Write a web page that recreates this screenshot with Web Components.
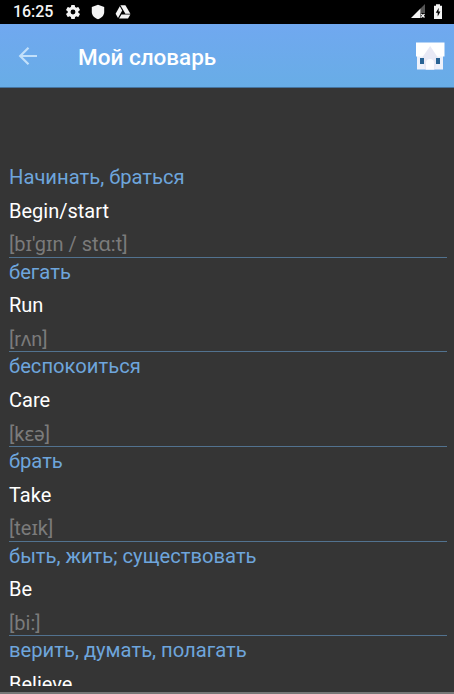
<!DOCTYPE html>
<html lang="ru">
<head>
<meta charset="utf-8">
<title>Мой словарь</title>
<style>
html, body { margin: 0; height: 100%; overflow: hidden; background: #353535; }
body { font-family: Roboto, "Noto Sans", sans-serif; }
</style>
</head>
<body>
<dictionary-screen></dictionary-screen>
<script>
class Base extends HTMLElement {
  constructor() {
    super();
    this.attachShadow({ mode: 'open' }).innerHTML = this.constructor.markup;
  }
}

class StatusBar extends Base {
  static markup = `
<style>
:host { display: flex; align-items: center; height: 24px; background: #000; color: #f4f4f4; padding: 0 11px 0 13px; box-sizing: border-box; }
.time { font: 500 16px/24px Roboto, sans-serif; width: 52px; letter-spacing: -.05px; white-space: nowrap; }
.left { display: flex; align-items: center; gap: 9px; flex: 1; margin-top: -1px; }
.right { display: flex; align-items: center; gap: 7px; margin-top: -2px; }
svg { display: block; fill: #f4f4f4; }
</style>
<span class="time">16:25</span>
<div class="left">
  <svg width="16" height="16" viewBox="1.2 1.2 21.600 21.600"><path d="M19.14 12.94c.04-.3.06-.61.06-.94s-.02-.64-.07-.94l2.03-1.58a.49.49 0 0 0 .12-.61l-1.92-3.32a.49.49 0 0 0-.59-.22l-2.39.96a7 7 0 0 0-1.62-.94l-.36-2.54a.48.48 0 0 0-.48-.41h-3.84a.48.48 0 0 0-.47.41l-.36 2.54a7.4 7.4 0 0 0-1.62.94l-2.39-.96a.48.48 0 0 0-.59.22L2.73 8.87a.48.48 0 0 0 .12.61l2.03 1.58a6 6 0 0 0 0 1.88l-2.03 1.58a.49.49 0 0 0-.12.61l1.92 3.32c.12.22.37.29.59.22l2.39-.96c.5.38 1.03.7 1.62.94l.36 2.54c.05.24.24.41.48.41h3.84c.24 0 .44-.17.47-.41l.36-2.54a7.4 7.4 0 0 0 1.62-.94l2.39.96c.22.08.47 0 .59-.22l1.92-3.32a.48.48 0 0 0-.12-.61zM12 15.3a3.3 3.3 0 1 1 0-6.600 3.300 3.300 0 0 1 0 6.600z"/></svg>
  <svg width="16" height="16" viewBox="0 0 16 16"><path d="M8 .8 14.200 3v5c0 3.300-2.600 6.100-6.200 7.200C4.400 14.100 1.800 11.300 1.800 8V3z"/></svg>
  <svg width="16" height="16" viewBox="0 0 16 16"><path d="M5.400 1.300h5L15.400 9.700h-5z"/><path d="M4.800 2.200 7.200 6.400 3 13.900.6 9.800z"/><path d="M6.400 10.600h9L13 14.500H4.100z"/></svg>
</div>
<div class="right">
  <svg width="15" height="15" viewBox="0 0 15 15"><path d="M9.500 4.500V14H0z"/><path d="M14 0v9H9.500V4.500z" opacity=".35"/><path d="m10.200 10 3.300 3.500m0-3.500-3.300 3.500" stroke="#f4f4f4" stroke-width="1.300"/></svg>
  <svg width="10" height="15" viewBox="0 0 10 15"><path d="M3 .2h4v1.600h2V15H1V1.800h2z"/><path d="M5.800 3.800 2.800 8.700h1.900v3.700l2.700-5H5.500z" fill="#000"/></svg>
</div>`;
}

class AppBar extends Base {
  static markup = `
<style>
:host { display: flex; align-items: center; height: 64px; box-sizing: border-box; padding: 0 9px 1px 17px; background: linear-gradient(#70a8f0, #68ade6); border-bottom: 1px solid #46749f; color: #fff; }
h1 { flex: 1; margin: 0 0 0 39px; font: 500 22.500px/28px Roboto, sans-serif; padding-top: 3px; white-space: nowrap; }
svg { display: block; }
.back { margin-top: 1px; }
.home { margin-top: 1px; }
</style>
<svg class="back" width="22" height="22" viewBox="0 0 22 22" fill="none" stroke="#c2e0fa" stroke-width="2.200"><path d="M20 11H3M11.500 2.700 3.200 11l8.300 8.300"/></svg>
<h1><slot></slot></h1>
<svg class="home" width="30" height="28" viewBox="0 0 30 28"><path fill="#edf1fb" d="M2 12h26v15.500H2z"/><path fill="#fff" d="M1 .5h28.500v14H1z"/><path fill="#e8e9f5" d="m15.200 4 7.300 11v4l-3 8.500h-9L7.500 19v-4z"/><path fill="#fbfcff" d="M11 27.500V21a4 4 0 0 1 8 0v6.500z"/><path fill="#286394" d="M5 16h4v6H5zM21 16h4v6h-4z"/></svg>`;
}

class WordEntry extends Base {
  static markup = `
<style>
:host { display: flex; flex-direction: column; gap: 9.600px; box-sizing: border-box; height: 94.600px; flex: none; padding-top: 2px; border-bottom: 1px solid #52728f; font: 400 20px/24px Roboto, "Noto Sans", sans-serif; white-space: nowrap; }
.ru { color: #6ea5dc; font-size: 20.200px; }
.en { color: #fff; }
.ipa { color: #7b7b7b; }
</style>
<div class="ru"><slot name="ru"></slot></div>
<div class="en"><slot name="en"></slot></div>
<div class="ipa"><slot name="ipa"></slot></div>`;
}

class DictionaryScreen extends Base {
  static markup = `
<style>
:host { display: flex; flex-direction: column; height: 694px; box-sizing: border-box; background: #353535; border-bottom: 2px solid #777; }
main { flex: 1; min-height: 0; margin-bottom: 6px; padding: 75.300px 7px 0 9px; overflow: hidden; display: flex; flex-direction: column; box-sizing: border-box; }
</style>
<status-bar></status-bar>
<app-bar>Мой словарь</app-bar>
<main>
  <word-entry><span slot="ru">Начинать, браться</span><span slot="en">Begin/start</span><span slot="ipa">[bɪ'gɪn / stɑ:t]</span></word-entry>
  <word-entry><span slot="ru">бегать</span><span slot="en">Run</span><span slot="ipa">[rʌn]</span></word-entry>
  <word-entry><span slot="ru">беспокоиться</span><span slot="en">Care</span><span slot="ipa">[kɛə]</span></word-entry>
  <word-entry><span slot="ru">брать</span><span slot="en">Take</span><span slot="ipa">[teɪk]</span></word-entry>
  <word-entry><span slot="ru">быть, жить; существовать</span><span slot="en">Be</span><span slot="ipa">[bi:]</span></word-entry>
  <word-entry><span slot="ru">верить, думать, полагать</span><span slot="en">Believe</span></word-entry>
</main>`;
}

customElements.define('status-bar', StatusBar);
customElements.define('app-bar', AppBar);
customElements.define('word-entry', WordEntry);
customElements.define('dictionary-screen', DictionaryScreen);
</script>
</body>
</html>
